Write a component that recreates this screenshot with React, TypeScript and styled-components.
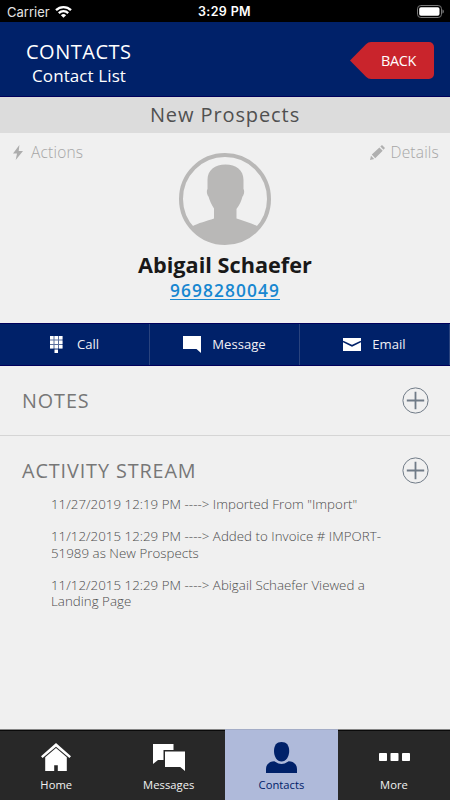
import React from "react";
import styled, { createGlobalStyle } from "styled-components";

const navy = "#002169";

const GlobalStyle = createGlobalStyle`
  * { box-sizing: border-box; }
  body { margin: 0; background: #f0f0f0; font-family: "Open Sans", "Noto Sans", sans-serif; }
  svg { display: block; flex: none; }
`;

const Screen = styled.div`
  width: 450px;
  height: 800px;
  display: flex;
  flex-direction: column;
  overflow: hidden;
  background: #f0f0f0;
  white-space: nowrap;
`;

const StatusBar = styled.div`
  height: 22px;
  flex: none;
  display: grid;
  grid-template-columns: 1fr auto 1fr;
  align-items: center;
  padding: 1px 6px 0 7px;
  background: #000;
  color: #fff;
  font: 400 13px/20px Inter, sans-serif;
`;

const Carrier = styled.div`
  display: flex;
  align-items: center;
  gap: 5px;
  color: #e4e4e4;
`;

const Clock = styled.div`
  font-weight: 600;
  font-size: 12.5px;
  letter-spacing: 0.35px;
  padding-right: 2px;
`;

const Battery = styled.div`
  justify-self: end;
`;

const Header = styled.header`
  height: 75px;
  flex: none;
  display: flex;
  justify-content: space-between;
  align-items: flex-start;
  padding: 18px 16px 0 26px;
  background: ${navy};
  border-bottom: 1px solid #00005b;
  color: #fff;
`;

const HeaderTitles = styled.div`
  display: flex;
  flex-direction: column;
`;

const HeaderTitle = styled.h1`
  margin: 0;
  font-size: 20px;
  font-weight: 400;
  line-height: 24px;
  letter-spacing: 0.5px;
`;

const HeaderSubtitle = styled.div`
  padding-left: 6px;
  font-size: 17px;
  line-height: 24px;
  letter-spacing: 0.1px;
`;

const BackButton = styled.button`
  width: 84px;
  height: 37px;
  margin-top: 2px;
  padding: 0 0 0 13px;
  border: 0;
  display: grid;
  place-items: center;
  background: transparent;
  color: #fff;
  font: 400 14.4px/37px "Open Sans", sans-serif;
  letter-spacing: -0.3px;

  > * { grid-area: 1 / 1; }
  > svg { margin-left: -13px; }
  > span { z-index: 1; padding-top: 1px; line-height: 36px; }
`;

const SectionBar = styled.div`
  height: 36px;
  flex: none;
  background: #dcdcdc;
  color: #505050;
  text-align: center;
  font-size: 20px;
  line-height: 36px;
  letter-spacing: 0.9px;
`;

const Profile = styled.section`
  height: 190px;
  flex: none;
  display: grid;
  grid-template-columns: 1fr 92px 1fr;
  grid-template-rows: 112px 1fr;
`;

const ProfileLink = styled.div<{ $end?: boolean }>`
  display: flex;
  align-items: center;
  justify-content: ${(p) => (p.$end ? "flex-end" : "flex-start")};
  gap: ${(p) => (p.$end ? "6px" : "8px")};
  height: 20px;
  margin: 9px ${(p) => (p.$end ? "11px" : "0")} 0 ${(p) => (p.$end ? "0" : "13px")};
  color: #a6a6a6;
  font-size: 15.5px;
  font-weight: 300;
  letter-spacing: 0.2px;
`;

const Avatar = styled.div`
  padding-top: 20px;
`;

const Identity = styled.div`
  grid-column: 1 / -1;
  text-align: center;
`;

const Name = styled.div`
  padding-top: 5px;
  color: #191919;
  font-size: 21.7px;
  font-weight: 700;
  line-height: 30px;
`;

const Phone = styled.a`
  display: inline-block;
  height: 19px;
  border-bottom: 1px solid #1787d0;
  color: #1787d0;
  font-size: 17.3px;
  font-weight: 600;
  line-height: 20px;
  letter-spacing: 1.1px;
`;

const ActionBar = styled.div`
  height: 43px;
  flex: none;
  display: grid;
  grid-template-columns: repeat(3, 150px);
  background: ${navy};
  border-top: 1px solid #00005b;
  border-bottom: 1px solid #00005b;
`;

const Action = styled.div<{ $gap: number }>`
  display: flex;
  align-items: center;
  justify-content: center;
  gap: ${(p) => p.$gap}px;
  padding-bottom: 1px;
  border-right: 1px solid #29437e;
  color: #f0f0f5;
  font-size: 13.1px;
`;

const Panel = styled.section<{ $divided?: boolean }>`
  height: ${(p) => (p.$divided ? "70px" : "auto")};
  flex: none;
  border-bottom: ${(p) => (p.$divided ? "1px solid #d5d5d5" : "0")};
`;

const PanelHead = styled.div`
  height: 69px;
  display: flex;
  align-items: center;
  justify-content: space-between;
  padding: 0 21px 0 22px;
`;

const PanelTitle = styled.h2`
  margin: 0;
  color: #777;
  font-size: 19.8px;
  font-weight: 400;
  letter-spacing: 0.9px;
`;

const Entries = styled.div`
  margin-top: -9px;
  padding-left: 51px;
  display: flex;
  flex-direction: column;
  gap: 16.2px;
  color: #4c4c4c;
  font-size: 13.3px;
  font-weight: 300;
  line-height: 16.2px;
  letter-spacing: 0.03px;
`;

const Entry = styled.p`
  margin: 0;
`;

const TabBar = styled.nav`
  height: 71px;
  flex: none;
  margin-top: auto;
  display: grid;
  grid-template-columns: 112.5px 112.5px 113px 112px;
`;

const Tab = styled.div<{ $active?: boolean }>`
  display: flex;
  flex-direction: column;
  align-items: center;
  padding-top: 9px;
  background: ${(p) => (p.$active ? "#afbada" : "#282828")};
  border-top: 1px solid ${(p) => (p.$active ? "#a4adc7" : "#858585")};
  box-shadow: ${(p) => (p.$active ? "none" : "inset 0 1px #0a0a0a")};
  color: ${(p) => (p.$active ? navy : "#f2f2f2")};
  font-size: 11.2px;
  letter-spacing: 0.05px;
`;

const TabIcon = styled.div`
  height: 36px;
  display: flex;
  align-items: center;
`;

const TabLabel = styled.span`
  line-height: 19px;
`;

function Plus() {
  return (
    <svg width="27" height="27" viewBox="0 0 27 27" fill="none" stroke="#707b87">
      <circle cx="13.5" cy="13.5" r="12.6" strokeWidth="1" />
      <path d="M4.8 13.5h17.4M13.5 4.8v17.4" strokeWidth="1.8" />
    </svg>
  );
}

const entries = [
  ['11/27/2019 12:19 PM ----> Imported From "Import"'],
  ["11/12/2015 12:29 PM ----> Added to Invoice # IMPORT-", "51989 as New Prospects"],
  ["11/12/2015 12:29 PM ----> Abigail Schaefer Viewed a", "Landing Page"],
];

export default function App() {
  return (
    <Screen>
      <GlobalStyle />
      <StatusBar>
        <Carrier>
          <span>Carrier</span>
          <svg width="17" height="12" viewBox="0 0 17 12" fill="none" stroke="#fff" strokeWidth="2.3">
            <path d="M1 4.2a10.8 10.8 0 0 1 15 0M3.8 7.1a6.7 6.7 0 0 1 9.4 0" />
            <path d="M8.5 11.8 5.9 9.2a3.8 3.8 0 0 1 5.2 0z" fill="#fff" stroke="none" />
          </svg>
        </Carrier>
        <Clock>3:29 PM</Clock>
        <Battery>
          <svg width="27" height="13" viewBox="0 0 27 13">
            <rect x=".5" y=".5" width="24" height="12" rx="3.3" fill="none" stroke="#777" />
            <rect x="2.2" y="2.2" width="20.3" height="8.6" rx="1.8" fill="#fff" />
            <path d="M25.5 4.5c1.7.6 1.7 3.4 0 4z" fill="#888" />
          </svg>
        </Battery>
      </StatusBar>

      <Header>
        <HeaderTitles>
          <HeaderTitle>CONTACTS</HeaderTitle>
          <HeaderSubtitle>Contact List</HeaderSubtitle>
        </HeaderTitles>
        <BackButton>
          <svg width="84" height="37" viewBox="0 0 84 37">
            <path d="M0 18.5 16 2.2Q18.2 0 21 0h58a5 5 0 0 1 5 5v27a5 5 0 0 1-5 5H21q-2.800 0-5-2.200Z" fill="#c9242c" />
          </svg>
          <span>BACK</span>
        </BackButton>
      </Header>

      <SectionBar>New Prospects</SectionBar>

      <Profile>
        <ProfileLink>
          <svg width="10" height="15" viewBox="0 0 10 15" fill="#adadad">
            <path d="M6.400 0 0 8.500h4L2.700 15 10 6H5.700z" />
          </svg>
          Actions
        </ProfileLink>
        <Avatar>
          <svg width="92" height="92" viewBox="0 0 92 92">
            <circle cx="46" cy="46" r="44" fill="none" stroke="#b9b8b7" strokeWidth="4" />
            <path
              d="M13 73.500C19 70 28 68 35 65.500V55.500C32.500 52 30.500 47 29.600 43.800C27.800 42 27.300 37.500 28.500 36V27C28.500 17 36 11.500 46.500 11.500S64.500 17 64.500 27V36C65.700 37.500 65.200 42 63.400 43.800C62.500 48 60.500 52 57.500 56V65.500C64 68 73 70 79 73.500A44.500 44.500 0 0 1 46 91A44.500 44.500 0 0 1 13 73.500Z"
              fill="#b9b8b7"
            />
          </svg>
        </Avatar>
        <ProfileLink $end>
          <svg width="15" height="15" viewBox="0 0 15 15" fill="#b0b0b0">
            <path d="m0 15 1-4.200L4.200 14zM1.800 9.600l7.600-7.200 3.300 3.300-7.500 7.500zM10.300 1.500 12 0l3 3-1.500 1.700z" />
          </svg>
          Details
        </ProfileLink>
        <Identity>
          <Name>Abigail Schaefer</Name>
          <Phone>9698280049</Phone>
        </Identity>
      </Profile>

      <ActionBar>
        <Action $gap={14}>
          <svg width="13" height="17" viewBox="0 0 13 17" fill="#fff">
            <path d="M0 0h3.500v3.500H0zM4.500 0H8v3.500H4.500zM9 0h3.500v3.500H9zM0 4.500h3.500V8H0zM4.500 4.500H8V8H4.500zM9 4.500h3.500V8H9zM0 9h3.500v3.500H0zM4.500 9H8v3.500H4.500zM9 9h3.500v3.500H9zM4.500 13.500H8V17H4.500z" />
            <path d="M0 0h12.500v12.500H0z" fillOpacity=".35" />
          </svg>
          Call
        </Action>
        <Action $gap={11}>
          <svg width="18" height="17" viewBox="0 0 18 17" fill="#fff">
            <path d="M0 0h18v17l-4.500-4H0z" />
          </svg>
          Message
        </Action>
        <Action $gap={11}>
          <svg width="18" height="13" viewBox="0 0 18 13">
            <path d="M0 0h18v13H0z" fill="#fff" />
            <path d="m0 3.500 9 4.300 9-4.300" fill="none" stroke={navy} strokeWidth="1.500" />
          </svg>
          Email
        </Action>
      </ActionBar>

      <Panel $divided>
        <PanelHead>
          <PanelTitle>NOTES</PanelTitle>
          <Plus />
        </PanelHead>
      </Panel>
      <Panel>
        <PanelHead>
          <PanelTitle>ACTIVITY STREAM</PanelTitle>
          <Plus />
        </PanelHead>
        <Entries>
          {entries.map((lines, i) => (
            <Entry key={i}>
              {lines[0]}
              {lines[1] && <><br />{lines[1]}</>}
            </Entry>
          ))}
        </Entries>
      </Panel>

      <TabBar>
        <Tab>
          <TabIcon>
            <svg width="30" height="28" viewBox="0 0 30 28" fill="#fff">
              <path d="M15 0 30 13.200 28.400 15 15 3.800 1.600 15 0 13.200z" />
              <path d="M15 5 25.800 14.200V28h-9v-5.800h-3.600V28H4.200V14.200z" />
            </svg>
          </TabIcon>
          <TabLabel>Home</TabLabel>
        </Tab>
        <Tab>
          <TabIcon>
            <svg width="32" height="27" viewBox="0 0 32 27" fill="#fff">
              <path d="M0 0h20.500v6H10.500v10H5L0 20z" />
              <path d="M12 7.500h20V27l-4.800-4H12z" />
            </svg>
          </TabIcon>
          <TabLabel>Messages</TabLabel>
        </Tab>
        <Tab $active>
          <TabIcon>
            <svg width="31" height="31" viewBox="0 0 31 31" fill={navy}>
              <path d="M15.500 0C20.500 0 23.200 3.300 23.200 9S20 19.500 15.500 19.500 8 14.700 8 9s2.700-9 7.500-9z" />
              <path d="M8.300 19.300Q15.500 24.500 22.700 19.300C28.500 19.700 31 23 31 27v4H0v-4c0-4 2.500-7.300 8.300-7.700z" />
            </svg>
          </TabIcon>
          <TabLabel>Contacts</TabLabel>
        </Tab>
        <Tab>
          <TabIcon>
            <svg width="31" height="8" viewBox="0 0 31 8" fill="#fff">
              <rect width="8" height="8" rx=".8" />
              <rect x="11.500" width="8" height="8" rx=".8" />
              <rect x="23" width="8" height="8" rx=".8" />
            </svg>
          </TabIcon>
          <TabLabel>More</TabLabel>
        </Tab>
      </TabBar>
    </Screen>
  );
}
